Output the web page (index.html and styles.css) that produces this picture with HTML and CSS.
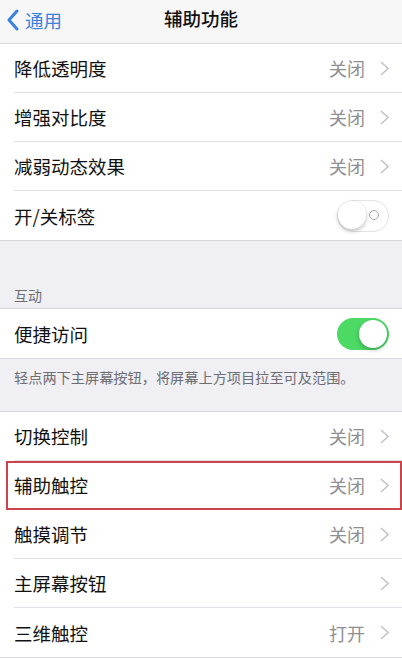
FILE: index.html
```html
<!DOCTYPE html>
<html lang="zh-CN">
<head>
  <meta charset="UTF-8">
  <meta name="viewport" content="width=device-width, initial-scale=1.0">
  <title>辅助功能</title>
  <link rel="stylesheet" href="styles.css">
</head>
<body>
  <header class="navbar">
    <a class="back" href="#">
      <svg width="14" height="22" viewBox="0 0 14 22"><polyline points="11,2 3,11 11,20" fill="none" stroke="#3a82e0" stroke-width="3" stroke-linecap="round" stroke-linejoin="round"/></svg>
      <span>通用</span>
    </a>
    <h1 class="title">辅助功能</h1>
  </header>

  <section class="group">
    <div class="cell"><div class="cell-inner"><span class="label">降低透明度</span><span class="detail">关闭</span><span class="chevron"></span></div></div>
    <div class="cell"><div class="cell-inner"><span class="label">增强对比度</span><span class="detail">关闭</span><span class="chevron"></span></div></div>
    <div class="cell"><div class="cell-inner"><span class="label">减弱动态效果</span><span class="detail">关闭</span><span class="chevron"></span></div></div>
    <div class="cell last"><div class="cell-inner"><span class="label">开/关标签</span><span class="switch off"><i class="knob"></i><i class="off-mark"></i></span></div></div>
  </section>

  <div class="section-header">互动</div>

  <section class="group">
    <div class="cell last"><div class="cell-inner"><span class="label">便捷访问</span><span class="switch on"><i class="knob"></i></span></div></div>
  </section>

  <div class="section-footer">轻点两下主屏幕按钮，将屏幕上方项目拉至可及范围。</div>

  <section class="group">
    <div class="cell"><div class="cell-inner"><span class="label">切换控制</span><span class="detail">关闭</span><span class="chevron"></span></div></div>
    <div class="cell marked"><div class="cell-inner"><span class="label">辅助触控</span><span class="detail">关闭</span><span class="chevron"></span></div></div>
    <div class="cell"><div class="cell-inner"><span class="label">触摸调节</span><span class="detail">关闭</span><span class="chevron"></span></div></div>
    <div class="cell"><div class="cell-inner"><span class="label">主屏幕按钮</span><span class="chevron"></span></div></div>
    <div class="cell"><div class="cell-inner"><span class="label">三维触控</span><span class="detail">打开</span><span class="chevron"></span></div></div>
  </section>
</body>
</html>
```

FILE: styles.css
```css
body {
  margin: 0;
  background-color: #efeff4;
  font-family: "Noto Sans CJK SC", "Noto Sans", sans-serif;
  color: #111;
  overflow: hidden;
}

/* 顶部导航栏 */
.navbar {
  height: 43px;
  display: flex;
  align-items: center;
  justify-content: center;
  position: relative;
  background-color: #f7f7f7;
  border-bottom: 1px solid #d8d8dc;
}

.back {
  position: absolute;
  left: 6px;
  top: 7px;
  display: flex;
  align-items: center;
  gap: 5px;
  color: #3a82e0;
  text-decoration: none;
  font-size: 18.5px;
  line-height: 26px;
}

.title {
  margin: 0;
  font-size: 18.5px;
  font-weight: 500;
  line-height: 26px;
  margin-top: -7px;
}

/* 列表分组 */
.group {
  background-color: #fff;
  border-bottom: 1px solid #d8d8dc;
}

.section-header + .group,
.section-footer + .group {
  border-top: 1px solid #d8d8dc;
}

.cell {
  padding-left: 14px;
  position: relative;
}

.cell-inner {
  height: 48px;
  display: flex;
  align-items: center;
  padding-right: 13px;
  border-bottom: 1px solid #e0e0e4;
}

.cell.last .cell-inner,
.cell:last-child .cell-inner {
  border-bottom: none;
  height: 49px;
}

.label {
  flex: 1;
  font-size: 18.5px;
  line-height: 26px;
}

.detail {
  font-size: 18px;
  color: #8e8e93;
  margin-right: 15px;
}

.chevron {
  width: 9px;
  height: 15px;
  background: url("data:image/svg+xml;utf8,<svg xmlns='http://www.w3.org/2000/svg' width='9' height='15' viewBox='0 0 9 15'><polyline points='1,1 8,7.5 1,14' fill='none' stroke='%23c4c4c9' stroke-width='1.6'/></svg>") no-repeat center;
}

/* 开关 */
.switch {
  width: 52px;
  height: 32px;
  border-radius: 16px;
  position: relative;
  box-sizing: border-box;
}

.switch.off {
  border: 1.5px solid #e3e3e6;
  background-color: #fff;
}

.switch.on {
  background-color: #4cd964;
}

.knob {
  position: absolute;
  top: 2px;
  width: 28px;
  height: 28px;
  border-radius: 50%;
  background-color: #fff;
  box-shadow: 0 2px 4px rgba(0, 0, 0, 0.25);
}

.switch.off .knob {
  left: 0;
  top: 0;
}

.switch.on .knob {
  right: 2px;
}

.off-mark {
  position: absolute;
  right: 9px;
  top: 9px;
  width: 8px;
  height: 8px;
  border: 1.5px solid #a8a8ad;
  border-radius: 50%;
}

/* 分组标题与说明 */
.section-header {
  height: 67px;
  box-sizing: border-box;
  padding: 44px 14px 0;
  font-size: 14px;
  color: #6d6d72;
}

.section-footer {
  height: 52px;
  box-sizing: border-box;
  padding: 8px 14px 0;
  font-size: 14.2px;
  color: #6d6d72;
  white-space: nowrap;
}

/* 红框标注 */
.cell.marked::after {
  content: "";
  position: absolute;
  left: 6px;
  right: 0;
  top: 0;
  bottom: 0;
  border: 2px solid #cc434b;
  pointer-events: none;
}
```
